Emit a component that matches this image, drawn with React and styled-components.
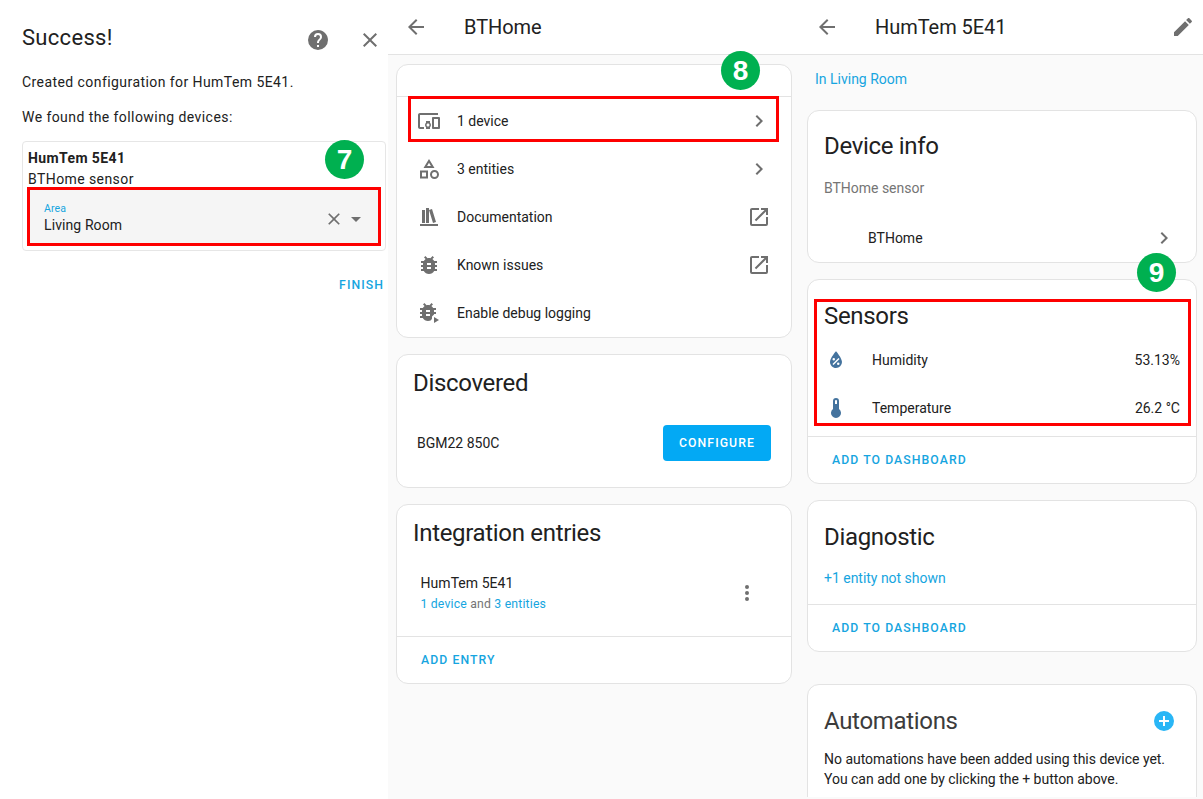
import React from "react";
import styled, { createGlobalStyle } from "styled-components";

const GlobalStyle = createGlobalStyle`
  * { box-sizing: border-box; }
  body { margin: 0; background: #fafafa; overflow: hidden; }
`;

const PATHS = {
  help: "M15.07,11.25L14.17,12.17C13.45,12.89 13,13.5 13,15H11V14.5C11,13.39 11.45,12.39 12.17,11.67L13.41,10.41C13.78,10.05 14,9.55 14,9C14,7.89 13.1,7 12,7A2,2 0 0,0 10,9H8A4,4 0 0,1 12,5A4,4 0 0,1 16,9C16,9.88 15.64,10.67 15.07,11.25M13,19H11V17H13M12,2A10,10 0 0,0 2,12A10,10 0 0,0 12,22A10,10 0 0,0 22,12C22,6.47 17.5,2 12,2Z",
  close: "M19,6.41L17.59,5L12,10.59L6.41,5L5,6.41L10.59,12L5,17.59L6.41,19L12,13.41L17.59,19L19,17.59L13.41,12L19,6.41Z",
  menuDown: "M7,10L12,15L17,10H7Z",
  back: "M20 11H7.83l5.59-5.59L12 4l-8 8 8 8 1.41-1.41L7.83 13H20v-2z",
  devices: "M3 6H21V4H3C1.9 4 1 4.9 1 6V18C1 19.1 1.9 20 3 20H7V18H3V6M13 12H9V13.78C8.39 14.33 8 15.11 8 16C8 16.89 8.39 17.67 9 18.22V20H13V18.22C13.61 17.67 14 16.88 14 16S13.61 14.33 13 13.78V12M11 17.5C10.17 17.5 9.5 16.83 9.5 16S10.17 14.5 11 14.5 12.5 15.17 12.5 16 11.83 17.5 11 17.5M22 8H16C15.5 8 15 8.5 15 9V19C15 19.5 15.5 20 16 20H22C22.5 20 23 19.5 23 19V9C23 8.5 22.5 8 22 8M21 18H17V10H21V18Z",
  shapes: "M11,13.5V21.5H3V13.5H11M9,15.5H5V19.5H9V15.5M12,2L17.5,11H6.5L12,2M12,5.86L10.08,9H13.92L12,5.86M17.5,13C20,13 22,15 22,17.5C22,20 20,22 17.5,22C15,22 13,20 13,17.5C13,15 15,13 17.5,13M17.5,15A2.5,2.5 0 0,0 15,17.5A2.5,2.5 0 0,0 17.5,20A2.5,2.5 0 0,0 20,17.5A2.5,2.5 0 0,0 17.5,15Z",
  books: "M9 3V18H12V3H9M12 5L16 18L19 17L15 4L12 5M5 5V18H8V5H5M3 19V21H21V19H3Z",
  bug: "M14,12H10V10H14M14,16H10V14H14M20,8H17.19C16.74,7.22 16.12,6.55 15.37,6.04L17,4.41L15.59,3L13.42,5.17C12.96,5.06 12.5,5 12,5C11.5,5 11.04,5.06 10.59,5.17L8.41,3L7,4.41L8.62,6.04C7.88,6.55 7.26,7.22 6.81,8H4V10H6.09C6.04,10.33 6,10.66 6,11V12H4V14H6V15C6,15.34 6.04,15.67 6.09,16H4V18H6.81C7.85,19.79 9.78,21 12,21C14.22,21 16.15,19.79 17.19,18H20V16H17.91C17.96,15.67 18,15.34 18,15V14H20V12H18V11C18,10.66 17.96,10.33 17.91,10H20V8Z",
  open: "M14,3V5H17.59L7.76,14.83L9.17,16.24L19,6.41V10H21V3M19,19H5V5H12V3H5C3.89,3 3,3.9 3,5V19A2,2 0 0,0 5,21H19A2,2 0 0,0 21,19V12H19V19Z",
  chevron: "M8.59,16.58L13.17,12L8.59,7.41L10,6L16,12L10,18L8.59,16.58Z",
  dots: "M12,16A2,2 0 0,1 14,18A2,2 0 0,1 12,20A2,2 0 0,1 10,18A2,2 0 0,1 12,16M12,10A2,2 0 0,1 14,12A2,2 0 0,1 12,14A2,2 0 0,1 10,12A2,2 0 0,1 12,10M12,4A2,2 0 0,1 14,6A2,2 0 0,1 12,8A2,2 0 0,1 10,6A2,2 0 0,1 12,4Z",
  pencil: "M20.71,7.04C21.1,6.65 21.1,6 20.71,5.63L18.37,3.29C18,2.9 17.35,2.9 16.96,3.29L15.12,5.12L18.87,8.87M3,17.25V21H6.75L17.81,9.93L14.06,6.18L3,17.25Z",
  humidity: "M12,3.25C12,3.25 6,10 6,14C6,17.32 8.69,20 12,20A6,6 0 0,0 18,14C18,10 12,3.25 12,3.25M14.47,9.97L15.53,11.03L9.53,17.03L8.47,15.97M9.75,10A1.25,1.25 0 0,1 11,11.25A1.25,1.25 0 0,1 9.75,12.5A1.25,1.25 0 0,1 8.5,11.25A1.25,1.25 0 0,1 9.75,10M14.25,14.5A1.25,1.25 0 0,1 15.5,15.75A1.25,1.25 0 0,1 14.25,17A1.25,1.25 0 0,1 13,15.75A1.25,1.25 0 0,1 14.25,14.5Z",
  thermometer: "M15 13V5A3 3 0 0 0 9 5V13A5 5 0 1 0 15 13M12 4A1 1 0 0 1 13 5V8H11V5A1 1 0 0 1 12 4Z",
  plus: "M17,13H13V17H11V13H7V11H11V7H13V11H17M12,2A10,10 0 0,0 2,12A10,10 0 0,0 12,22A10,10 0 0,0 22,12A10,10 0 0,0 12,2Z",
};

const Svg = styled.svg`
  display: block;
  flex: none;
  width: ${(p) => p.$size}px;
  height: ${(p) => p.$size}px;
  fill: ${(p) => p.$color};
`;

const Icon = ({ name, size = 24, color = "#6f6f6f" }) => (
  <Svg viewBox="0 0 24 24" $size={size} $color={color} aria-hidden="true">
    <path fillRule="evenodd" d={PATHS[name]} />
  </Svg>
);

const BugPlay = () => (
  <Svg viewBox="0 0 24 24" $size={24} $color="#6f6f6f" aria-hidden="true">
    <g transform="translate(-1 -1)">
      <path fillRule="evenodd" d={PATHS.bug} />
    </g>
    <path fill="#fff" d="M19.5 13.2L17 13.6L15 15.5V17.5L13.2 21.5H24V13.2Z" />
    <path d="M17 16V22L22 19Z" />
  </Svg>
);

const Page = styled.main`
  display: grid;
  grid-template-columns: 388px 411px 404px;
  width: 1203px;
  height: 799px;
  overflow: hidden;
  background: #fafafa;
  color: #212121;
  font-family: Roboto, "Liberation Sans", sans-serif;
  font-size: 14px;
  line-height: 20px;
`;

const Text = styled.span`
  flex: none;
  white-space: nowrap;
  color: ${(p) => p.$color || "inherit"};
  font-size: ${(p) => p.$size || 14}px;
  font-weight: ${(p) => p.$weight || 400};
  line-height: ${(p) => p.$line || 20}px;
  letter-spacing: ${(p) => p.$ls || 0}px;
`;

const Grow = styled.div`
  flex: 1;
`;

const Dialog = styled.section`
  display: flex;
  flex-direction: column;
  padding: 22px 2px 0 22px;
  background: #fff;
`;

const DialogHeader = styled.header`
  display: flex;
  align-items: center;
  gap: 28px;
  height: 35px;
  margin-bottom: 15px;
  padding-right: 4.5px;
`;

const DialogTitle = styled.h1`
  flex: 1;
  margin: 0;
  padding-bottom: 3px;
  font-size: 22px;
  font-weight: 400;
  line-height: 30px;
  letter-spacing: 0.3px;
`;

const Paragraph = styled.p`
  margin: 0 0 15px;
  letter-spacing: 0.43px;
  white-space: nowrap;
`;

const DeviceBox = styled.article`
  position: relative;
  display: flex;
  flex-direction: column;
  width: 364px;
  height: 110px;
  margin-top: -1px;
  padding: 6px 5px 0;
  border: 1px solid #e6e6e6;
  border-radius: 4px;
`;

const AreaField = styled.div`
  position: relative;
  display: flex;
  align-items: center;
  height: 56px;
  padding: 0 12px 0 16px;
  background: #f5f5f5;
`;

const FieldText = styled.div`
  display: flex;
  flex: 1;
  flex-direction: column;
  padding-top: 1px;
`;

const FieldIcons = styled.div`
  display: flex;
  align-items: center;
  padding-top: 2px;
`;

const DialogActions = styled.footer`
  display: flex;
  justify-content: flex-end;
  padding: 24px 2px 0 0;
`;

const Highlight = styled.div`
  position: absolute;
  top: ${(p) => p.$top}px;
  right: ${(p) => p.$right}px;
  bottom: ${(p) => p.$bottom}px;
  left: ${(p) => p.$left}px;
  border: 3px solid #fe0000;
  pointer-events: none;
`;

const Badge = styled.div`
  position: absolute;
  z-index: 2;
  top: ${(p) => p.$top}px;
  right: ${(p) => p.$right}px;
  display: flex;
  align-items: center;
  justify-content: center;
  width: 39px;
  height: 39px;
  border-radius: 50%;
  background: #00b050;
  color: #fff;
  font: bold 28px/39px "Liberation Sans", Arial, sans-serif;
`;

const Panel = styled.section`
  display: flex;
  flex-direction: column;
  height: 797px;
  overflow: hidden;
`;

const TopBar = styled.header`
  display: flex;
  flex: none;
  align-items: center;
  height: 55px;
  padding: 0 ${(p) => p.$right || 0}px 0 16px;
  border-bottom: 1px solid #e3e3e3;
  background: #fff;
`;

const BarTitle = styled.h2`
  flex: 1;
  margin: 0 0 0 36px;
  font-size: 20px;
  font-weight: 400;
  line-height: 28px;
  letter-spacing: -0.05px;
`;

const Cards = styled.div`
  display: flex;
  flex-direction: column;
  gap: 16px;
  padding: ${(p) => p.$pad};
`;

const Card = styled.article`
  position: relative;
  display: flex;
  flex: none;
  flex-direction: column;
  height: ${(p) => p.$height}px;
  margin-top: ${(p) => p.$offset || 0}px;
  border: 1px solid #e3e3e3;
  border-radius: 12px;
  background: #fff;
`;

const CardTitle = styled.h3`
  margin: 0;
  padding: ${(p) => p.$top}px 16px 0;
  color: ${(p) => p.$color || "inherit"};
  font-size: 24px;
  font-weight: 400;
  line-height: 32px;
  letter-spacing: -0.32px;
`;

const CardHead = styled.div`
  height: 32px;
  border-bottom: 1px solid #e3e3e3;
`;

const Row = styled.div`
  position: relative;
  display: flex;
  flex: none;
  align-items: center;
  height: ${(p) => p.$height || 48}px;
  padding: ${(p) => p.$pad || "0 20px"};
  gap: ${(p) => p.$gap || 16}px;
`;

const SensorList = styled.div`
  padding-top: 4px;
`;

const Footer = styled.footer`
  display: flex;
  flex: none;
  align-items: center;
  height: ${(p) => p.$height || 47}px;
  margin-top: auto;
  padding-left: 24px;
  border-top: 1px solid #e3e3e3;
`;

const Action = styled.button`
  padding: 0;
  border: 0;
  background: none;
  color: #16a5e0;
  font: 500 12.25px/20px Roboto, sans-serif;
  letter-spacing: 1.07px;
`;

const Configure = styled(Action)`
  width: 108px;
  height: 36px;
  border-radius: 4px;
  background: #03a9f4;
  color: #fff;
`;

const EntryText = styled.div`
  display: flex;
  flex: 1;
  flex-direction: column;
  padding-top: 1px;
`;

const Link = styled.span`
  color: #16a5e0;
`;

const AreaLink = styled.div`
  padding: 14px 16px 0;
  color: #16a5e0;
`;

const Block = styled.div`
  padding: ${(p) => p.$top || 0}px 16px 0;
  color: ${(p) => p.$color || "inherit"};
  letter-spacing: -0.02px;
  white-space: nowrap;
`;

const MENU = [
  { icon: "devices", label: "1 device", end: "chevron", marked: true },
  { icon: "shapes", label: "3 entities", end: "chevron" },
  { icon: "books", label: "Documentation", end: "open" },
  { icon: "bug", label: "Known issues", end: "open" },
  { icon: "bugPlay", label: "Enable debug logging" },
];

const SENSORS = [
  { icon: "humidity", label: "Humidity", value: "53.13%" },
  { icon: "thermometer", label: "Temperature", value: "26.2 °C" },
];

export default function App() {
  return (
    <Page>
      <GlobalStyle />
      <Dialog>
        <DialogHeader>
          <DialogTitle>Success!</DialogTitle>
          <Icon name="help" />
          <Icon name="close" />
        </DialogHeader>
        <Paragraph>Created configuration for HumTem 5E41.</Paragraph>
        <Paragraph>We found the following devices:</Paragraph>
        <DeviceBox>
          <Text $weight={700} $ls={0.4}>HumTem 5E41</Text>
          <Text $line={22} $ls={0.42}>BTHome sensor</Text>
          <AreaField>
            <FieldText>
              <Text $size={10.5} $line={13} $ls={0.1} $color="#16a5e0">Area</Text>
              <Text $ls={0.1}>Living Room</Text>
            </FieldText>
            <FieldIcons>
              <Icon name="close" size={20} />
              <Icon name="menuDown" />
            </FieldIcons>
            <Highlight $top={-3} $right={-1} $bottom={0} $left={-1} />
          </AreaField>
          <Badge $top={-2} $right={21}>7</Badge>
        </DeviceBox>
        <DialogActions>
          <Action>FINISH</Action>
        </DialogActions>
      </Dialog>

      <Panel>
        <TopBar>
          <Icon name="back" />
          <BarTitle>BTHome</BarTitle>
        </TopBar>
        <Cards $pad="9px 7px 0 8px">
          <Card $height={274}>
            <CardHead />
            {MENU.map((item) => (
              <Row key={item.label}>
                {item.icon === "bugPlay" ? <BugPlay /> : <Icon name={item.icon} />}
                <Text>{item.label}</Text>
                <Grow />
                {item.end && <Icon name={item.end} />}
                {item.marked && <Highlight $top={-1} $right={12} $bottom={3} $left={11} />}
              </Row>
            ))}
            <Badge $top={-14} $right={31}>8</Badge>
          </Card>
          <Card $height={134}>
            <CardTitle $top={12}>Discovered</CardTitle>
            <Row $height={88} $pad="0 20px 0 20px">
              <Text>BGM22 850C</Text>
              <Grow />
              <Configure>CONFIGURE</Configure>
            </Row>
          </Card>
          <Card $height={180}>
            <CardTitle $top={12}>Integration entries</CardTitle>
            <Row $height={86} $pad="2px 32px 0 23.5px">
              <EntryText>
                <Text $ls={0.05} $line={21}>HumTem 5E41</Text>
                <Text $size={12.25} $ls={0.18} $color="#757575">
                  <Link>1 device</Link> and <Link>3 entities</Link>
                </Text>
              </EntryText>
              <Icon name="dots" />
            </Row>
            <Footer>
              <Action>ADD ENTRY</Action>
            </Footer>
          </Card>
        </Cards>
      </Panel>

      <Panel>
        <TopBar $right={8.5}>
          <Icon name="back" />
          <BarTitle>HumTem 5E41</BarTitle>
          <Icon name="pencil" />
        </TopBar>
        <AreaLink>In Living Room</AreaLink>
        <Cards $pad="21px 6px 0 8px">
          <Card $height={153}>
            <CardTitle $top={19}>Device info</CardTitle>
            <Block $top={16} $color="#757575">BTHome sensor</Block>
            <Row $pad="2px 20px 0 60px" $height={78}>
              <Text>BTHome</Text>
              <Grow />
              <Icon name="chevron" />
            </Row>
          </Card>
          <Card $height={205}>
            <CardTitle $top={20}>Sensors</CardTitle>
            <SensorList>
              {SENSORS.map((sensor) => (
                <Row key={sensor.label} $pad="0 16px 0 16px" $gap={24}>
                  <Icon name={sensor.icon} color="#44739e" />
                  <Text>{sensor.label}</Text>
                  <Grow />
                  <Text>{sensor.value}</Text>
                </Row>
              ))}
            </SensorList>
            <Footer>
              <Action>ADD TO DASHBOARD</Action>
            </Footer>
            <Highlight $top={19} $right={5} $bottom={57} $left={6} />
            <Badge $top={-27} $right={20}>9</Badge>
          </Card>
          <Card $height={152}>
            <CardTitle $top={20}>Diagnostic</CardTitle>
            <Block $top={15} $color="#16a5e0">+1 entity not shown</Block>
            <Footer>
              <Action>ADD TO DASHBOARD</Action>
            </Footer>
          </Card>
          <Card $height={140} $offset={16}>
            <Row $pad="8px 20px 0 0" $height={64}>
              <CardTitle $top={0} $color="#3c3c3c">Automations</CardTitle>
              <Grow />
              <Icon name="plus" color="#29b6f6" />
            </Row>
            <Block>
              No automations have been added using this device yet.
              <br />
              You can add one by clicking the + button above.
            </Block>
          </Card>
        </Cards>
      </Panel>
    </Page>
  );
}
